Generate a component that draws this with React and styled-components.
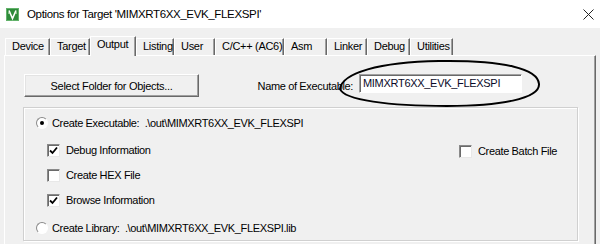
import React from 'react'
import styled, { createGlobalStyle } from 'styled-components'

const GlobalStyle = createGlobalStyle`
  html, body {
    margin: 0;
    padding: 0;
    background: #f0f0f0;
  }
  body {
    font-family: "Liberation Sans", Arial, sans-serif;
    color: #000;
  }
`

const Window = styled.div`
  width: 600px;
  height: 244px;
  overflow: hidden;
  display: flex;
  flex-direction: column;
  background: #f0f0f0;
`

const TitleBar = styled.div`
  height: 28px;
  flex-shrink: 0;
  display: flex;
  align-items: center;
  padding-left: 6px;
  background: #fff;
`

const Title = styled.span`
  flex: 1;
  margin-left: 8px;
  font-size: 11.5px;
  letter-spacing: -0.35px;
  white-space: nowrap;
`

const CloseBox = styled.div`
  width: 24px;
  height: 28px;
  display: flex;
  align-items: center;
  justify-content: center;
`

const Body = styled.div`
  flex: 1;
  display: flex;
  flex-direction: column;
  padding: 8px 4px 0 4px;
`

const TabStrip = styled.div`
  height: 19px;
  display: flex;
  align-items: flex-end;
  margin-left: 1px;
`

const Tab = styled.div`
  box-sizing: border-box;
  width: ${p => p.$w}px;
  height: ${p => (p.$active ? 20 : 17)}px;
  margin-bottom: ${p => (p.$active ? -1 : 0)}px;
  padding-left: 6px;
  border-top: 1px solid #fff;
  border-left: 1px solid #fff;
  border-right: 1px solid #696969;
  box-shadow: inset -1px 0 #a0a0a0;
  background: #f0f0f0;
  font-size: 11px;
  letter-spacing: -0.3px;
  line-height: 15px;
  white-space: nowrap;
  position: relative;
  z-index: ${p => (p.$active ? 1 : 0)};
`

const Page = styled.div`
  flex: 1;
  border-top: 1px solid #fff;
  border-left: 1px solid #fff;
  border-right: 1px solid #696969;
  box-shadow: inset -1px 0 #a0a0a0;
  padding: 18px 17px 0 18px;
`

const TopRow = styled.div`
  display: grid;
  grid-template-columns: 175px 160px 163px;
  align-items: center;
  margin-left: 1px;
`

const Button = styled.div`
  box-sizing: border-box;
  height: 23px;
  display: flex;
  align-items: center;
  justify-content: center;
  border: 1px solid;
  border-color: #fff #696969 #696969 #fff;
  box-shadow: inset -1px -1px #a0a0a0, inset 1px 1px #e3e3e3;
  background: #f0f0f0;
  font-size: 11px;
  letter-spacing: -0.3px;
`

const Label = styled.span`
  text-align: right;
  padding-right: 6px;
  font-size: 11px;
  letter-spacing: -0.35px;
  white-space: nowrap;
  margin-top: 1px;
`

const InputWrap = styled.div`
  position: relative;
  height: 19px;
  align-self: start;
`

const Input = styled.div`
  box-sizing: border-box;
  height: 19px;
  border: 1px solid;
  border-color: #a0a0a0 #fff #fff #a0a0a0;
  box-shadow: inset 1px 1px #696969;
  background: #fff;
  padding: 2px 0 0 3px;
  font-size: 11px;
  letter-spacing: -0.3px;
  color: #0a0a28;
`

const Annotation = styled.svg`
  position: absolute;
  left: -20px;
  top: -15px;
  width: 202px;
  height: 48px;
  overflow: visible;
  pointer-events: none;
`

const GroupBox = styled.div`
  box-sizing: border-box;
  margin-top: 10px;
  width: 555px;
  height: 134px;
  border: 1px solid #d0d0d0;
  box-shadow: 1px 1px 0 #fff, inset 1px 1px 0 #fff;
  display: flex;
  padding: 5px 0 0 12px;
`

const OptionCol = styled.div`
  flex: 1;
  display: flex;
  flex-direction: column;
`

const SideCol = styled.div`
  width: 118px;
  padding-top: 28px;
`

const Row = styled.div`
  height: 20px;
  display: flex;
  align-items: center;
  margin-top: ${p => p.$gap || 0}px;
  padding-left: ${p => p.$indent || 0}px;
  font-size: 11px;
  letter-spacing: -0.35px;
  white-space: nowrap;
`

const Box = styled.div`
  box-sizing: border-box;
  width: 13px;
  height: 13px;
  margin-right: 6px;
  border: 1px solid;
  border-color: #8a8a8a #e8e8e8 #e8e8e8 #8a8a8a;
  box-shadow: inset 1px 1px #6a6a6a;
  background: #fff;
  display: flex;
  align-items: center;
  justify-content: center;
  flex-shrink: 0;
`

const Radio = styled.div`
  box-sizing: border-box;
  width: 12px;
  height: 12px;
  margin-right: 4px;
  border-radius: 50%;
  border: 1px solid;
  border-color: #8a8a8a #fff #fff #8a8a8a;
  background: #fff;
  display: flex;
  align-items: center;
  justify-content: center;
  flex-shrink: 0;
  &::after {
    content: '';
    width: 4px;
    height: 4px;
    border-radius: 50%;
    background: ${p => (p.$on ? '#000' : 'transparent')};
  }
`

const Check = () => (
  <svg width="9" height="9" viewBox="0 0 9 9">
    <path d="M1 4.5 L3.5 7 L8 1.5" fill="none" stroke="#000" strokeWidth="1.8" />
  </svg>
)

const CheckItem = ({ on, children, ...rest }) => (
  <Row {...rest}>
    <Box>{on && <Check />}</Box>
    {children}
  </Row>
)

const AppIcon = () => (
  <svg width="13" height="13" viewBox="0 0 13 13">
    <rect x="0" y="0" width="13" height="13" fill="#2e8b3a" />
    <rect x="0.5" y="0.5" width="12" height="12" fill="none" stroke="#62b26a" />
    <path d="M3 2.5 L6.5 10.5 L10 2.5" fill="none" stroke="#fff" strokeWidth="1.6" />
    <path d="M2 5 H4 M9 5 H11" stroke="#dff0d0" strokeWidth="1" />
  </svg>
)

const tabs = [
  ['Device', 45],
  ['Target', 40],
  ['Output', 46],
  ['Listing', 38],
  ['User', 41],
  ['C/C++ (AC6)', 69],
  ['Asm', 43],
  ['Linker', 40],
  ['Debug', 43],
  ['Utilities', 43],
]

export default function App() {
  return (
    <>
      <GlobalStyle />
      <Window>
        <TitleBar>
          <AppIcon />
          <Title>Options for Target 'MIMXRT6XX_EVK_FLEXSPI'</Title>
          <CloseBox>
            <svg width="11" height="11" viewBox="0 0 11 11">
              <path d="M0.5 0.5 L10.5 10.5 M10.5 0.5 L0.5 10.5" stroke="#222" strokeWidth="1" />
            </svg>
          </CloseBox>
        </TitleBar>
        <Body>
          <TabStrip>
            {tabs.map(([name, w]) => (
              <Tab key={name} $w={w} $active={name === 'Output'}>
                {name}
              </Tab>
            ))}
          </TabStrip>
          <Page>
            <TopRow>
              <Button>Select Folder for Objects...</Button>
              <Label>Name of Executable:</Label>
              <InputWrap>
                <Input>MIMXRT6XX_EVK_FLEXSPI</Input>
                <Annotation viewBox="0 0 202 48">
                  <path
                    d="M1 30 C 3 14, 40 3, 100 2 C 165 1, 199 10, 200 25 C 201 40, 160 47, 108 47 C 50 47, 5 41, 1 30 Z"
                    fill="none"
                    stroke="#000"
                    strokeWidth="2"
                  />
                </Annotation>
              </InputWrap>
            </TopRow>
            <GroupBox>
              <OptionCol>
                <Row>
                  <Radio $on />
                  Create Executable:&nbsp; .\out\MIMXRT6XX_EVK_FLEXSPI
                </Row>
                <CheckItem on $gap={7} $indent={11}>Debug Information</CheckItem>
                <CheckItem $gap={5} $indent={11}>Create HEX File</CheckItem>
                <CheckItem on $gap={5} $indent={11}>Browse Information</CheckItem>
                <Row $gap={8}>
                  <Radio />
                  Create Library:&nbsp; .\out\MIMXRT6XX_EVK_FLEXSPI.lib
                </Row>
              </OptionCol>
              <SideCol>
                <CheckItem>Create Batch File</CheckItem>
              </SideCol>
            </GroupBox>
          </Page>
        </Body>
      </Window>
    </>
  )
}
